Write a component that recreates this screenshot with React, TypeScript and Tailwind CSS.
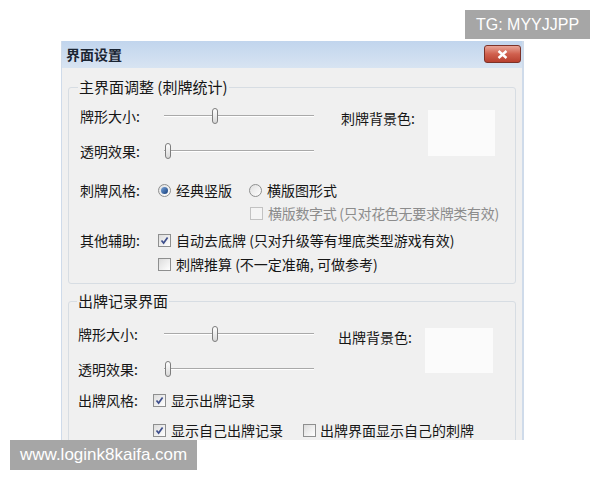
import React from "react";

const cjk = { fontFamily: '"Noto Sans CJK SC", "Noto Sans", sans-serif' };

function Slider({ at }: { at: number }) {
  return (
    <div className="flex items-center w-[150px] h-[16px]">
      <div className="h-[2px] border-t border-[#a9a9a9] border-b-white bg-white" style={{ width: at }} />
      <div className="w-[6px] h-[16px] rounded-[3px] border border-[#7d7d7d] bg-gradient-to-b from-white to-[#d8d8d8] shrink-0" />
      <div className="h-[2px] flex-1 border-t border-[#a9a9a9] bg-white" />
    </div>
  );
}

function Radio({ checked }: { checked?: boolean }) {
  return (
    <div className="w-[13px] h-[13px] rounded-full border border-[#8e8f8f] bg-gradient-to-br from-[#e0e0e0] to-white flex items-center justify-center shrink-0">
      {checked && <div className="w-[7px] h-[7px] rounded-full bg-gradient-to-br from-[#7aa6dc] to-[#143d7a]" />}
    </div>
  );
}

function Check({ checked, disabled }: { checked?: boolean; disabled?: boolean }) {
  return (
    <div
      className={
        "w-[13px] h-[13px] border flex items-center justify-center shrink-0 " +
        (disabled ? "border-[#c2c2c2] bg-[#f4f4f4]" : "border-[#8e8f8f] bg-gradient-to-br from-[#dcdcdc] to-white")
      }
    >
      {checked && (
        <svg width="9" height="9" viewBox="0 0 9 9">
          <path d="M1.5 4.5 L3.6 7 L7.6 1.5" fill="none" stroke="#3e4f8c" strokeWidth="1.7" />
        </svg>
      )}
    </div>
  );
}

export default function App() {
  return (
    <div className="relative w-[600px] h-[480px] bg-white overflow-hidden text-[14px] text-[#161616] whitespace-nowrap" style={cjk}>
      <div className="pt-[41px] pl-[61px]">
        {/* window */}
        <div className="w-[463px] h-[399px] overflow-hidden bg-[#f0f0f0] border-l border-r-2 border-[#cfdbea]">
          {/* title bar */}
          <div className="h-[27px] flex items-start justify-between bg-gradient-to-b from-[#c1d5ed] to-[#d8e4f2]">
            <div className="pl-[4px] leading-[27px] text-[14px] font-bold text-[#1b2533]">界面设置</div>
            <div className="mt-[4px] mr-[1px] w-[37px] h-[18px] rounded-[3px] border border-[#7c3228] bg-gradient-to-b from-[#e8a497] via-[#d0604e] to-[#b8402f] flex items-center justify-center">
              <svg width="11" height="9" viewBox="0 0 11 9">
                <path d="M1.5 1 L9.5 8 M9.5 1 L1.5 8" stroke="white" strokeWidth="2.4" />
              </svg>
            </div>
          </div>

          {/* body */}
          <div className="px-[6px] pt-[9px]">
            <fieldset className="border border-[#d7dde3] rounded-[3px] px-[11px] pb-[11px]">
              <legend className="text-[15px] leading-[20px] px-[1px] -ml-[2px]">主界面调整 (刺牌统计)</legend>
              <div className="flex">
                <div className="flex flex-col">
                  <div className="h-[38px] flex items-center">
                    <div className="w-[84px]">牌形大小:</div>
                    <Slider at={48} />
                  </div>
                  <div className="h-[32px] flex items-center">
                    <div className="w-[84px]">透明效果:</div>
                    <Slider at={1} />
                  </div>
                </div>
                <div className="ml-[27px] pt-[13px] flex items-start">
                  <div className="w-[87px] leading-[16px]">刺牌背景色:</div>
                  <div className="w-[67px] h-[46px] bg-[#fbfbfb]" />
                </div>
              </div>
              <div className="mt-[11px] h-[24px] flex items-center">
                <div className="w-[78px]">刺牌风格:</div>
                <Radio checked />
                <span className="ml-[5px]">经典竖版</span>
                <div className="ml-[17px]">
                  <Radio />
                </div>
                <span className="ml-[5px]">横版图形式</span>
              </div>
              <div className="h-[22px] flex items-center pl-[170px] text-[#8c8c8c]">
                <Check disabled />
                <span className="ml-[5px] tracking-[-0.3px]">横版数字式 (只对花色无要求牌类有效)</span>
              </div>
              <div className="h-[32px] flex items-center">
                <div className="w-[78px]">其他辅助:</div>
                <Check checked />
                <span className="ml-[5px]">自动去底牌 (只对升级等有埋底类型游戏有效)</span>
              </div>
              <div className="h-[16px] flex items-center pl-[78px]">
                <Check />
                <span className="ml-[5px]">刺牌推算 (不一定准确, 可做参考)</span>
              </div>
            </fieldset>

            <fieldset className="mt-[7px] border border-[#d7dde3] rounded-[3px] px-[9px]">
              <legend className="text-[15px] leading-[20px] px-[1px] -ml-[1px]">出牌记录界面</legend>
              <div className="flex">
                <div className="flex flex-col">
                  <div className="h-[46px] flex items-center">
                    <div className="w-[86px]">牌形大小:</div>
                    <Slider at={48} />
                  </div>
                  <div className="h-[24px] flex items-center">
                    <div className="w-[86px]">透明效果:</div>
                    <Slider at={1} />
                  </div>
                </div>
                <div className="ml-[24px] pt-[18px] flex items-start">
                  <div className="w-[87px] leading-[16px]">出牌背景色:</div>
                  <div className="-mt-[1px] w-[68px] h-[45px] bg-[#fbfbfb]" />
                </div>
              </div>
              <div className="h-[38px] flex items-center">
                <div className="w-[75px]">出牌风格:</div>
                <Check checked />
                <span className="ml-[5px]">显示出牌记录</span>
              </div>
              <div className="h-[22px] flex items-center pl-[75px]">
                <Check checked />
                <span className="ml-[5px]">显示自己出牌记录</span>
                <div className="ml-[20px]">
                  <Check />
                </div>
                <span className="ml-[4px]">出牌界面显示自己的刺牌</span>
              </div>
              <div className="h-[20px]" />
            </fieldset>
          </div>
        </div>
      </div>

      {/* watermarks */}
      <div
        className="absolute left-[465px] top-[10px] w-[125px] h-[29px] bg-[#a6a6a6] text-white text-[16px] flex items-center justify-center"
        style={{ fontFamily: '"Liberation Sans", Arial, sans-serif' }}
      >
        TG: MYYJJPP
      </div>
      <div
        className="absolute left-[10px] top-[440px] w-[187px] h-[30px] bg-[#a6a6a6] text-white text-[17px] flex items-center pl-[10px]"
        style={{ fontFamily: '"Liberation Sans", Arial, sans-serif' }}
      >
        www.logink8kaifa.com
      </div>
    </div>
  );
}
